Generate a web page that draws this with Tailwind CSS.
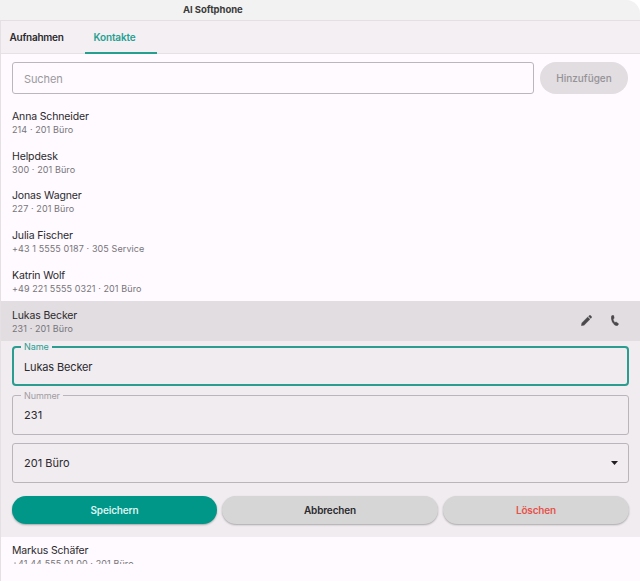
<!DOCTYPE html>
<html lang="de">

<head>
    <meta charset="UTF-8">
    <meta name="viewport" content="width=device-width, initial-scale=1.0">
    <title>AI Softphone</title>
    <script src="https://cdn.jsdelivr.net/npm/@tailwindcss/browser@4"></script>
</head>

<body class="bg-white font-['Inter',sans-serif] text-[#2b292d] overflow-hidden">
    <div class="w-[640px] h-[581px] flex flex-col bg-[#fefaff] rounded-tr-[14px] overflow-hidden">
        <!-- Title bar -->
        <header class="h-[21px] shrink-0 bg-[#f2f2f2] border-b border-[#e3dfe3] pl-[183px] text-[9.5px] leading-[20px] font-bold tracking-[-0.05px] text-[#3b3b3b]">AI Softphone</header>

        <main class="flex-1 min-h-0 border-l border-[#e4e0e4]">
            <!-- Tabs -->
            <nav class="h-[33px] bg-[#f3eff3] border-b border-[#e5e1e5] flex text-[10px] leading-[32px] font-semibold">
                <span class="w-[84px] pl-[8.5px] tracking-[-0.25px]">Aufnahmen</span>
                <span class="w-[72px] h-[33px] pl-[8.5px] tracking-[-0.15px] text-[#269f91] border-b-2 border-[#269f91]">Kontakte</span>
            </nav>

            <!-- Search -->
            <div class="flex gap-[6px] pl-[11px] pt-[8px] h-[49px]">
                <div class="w-[522px] h-8 border border-[#bab6bb] rounded-[3px] pl-[11px] text-[11px] leading-[32px] tracking-[-0.1px] text-[#9c999d]">Suchen</div>
                <button class="w-[88px] h-8 rounded-full bg-[#e1dde1] text-[10px] font-medium text-[#969297]">Hinzufügen</button>
            </div>

            <!-- Contact list -->
            <div class="h-[461px] overflow-hidden">
                <div class="h-[39.6px] pl-[11px] pt-[7px]">
                    <div class="text-[10.5px] leading-[13px] tracking-[-0.15px]">Anna Schneider</div>
                    <div class="text-[9px] leading-[13px] tracking-[0.1px] text-[#777479]">214 · 201 Büro</div>
                </div>
                <div class="h-[39.6px] pl-[11px] pt-[7.5px]">
                    <div class="text-[10.5px] leading-[13px] tracking-[-0.12px]">Helpdesk</div>
                    <div class="text-[9px] leading-[13px] tracking-[0.1px] text-[#777479]">300 · 201 Büro</div>
                </div>
                <div class="h-[39.6px] pl-[11px] pt-[7.2px]">
                    <div class="text-[10.5px] leading-[13px] tracking-[-0.15px]">Jonas Wagner</div>
                    <div class="text-[9px] leading-[13px] tracking-[0.1px] text-[#777479]">227 · 201 Büro</div>
                </div>
                <div class="h-[39.6px] pl-[11px] pt-[7.5px]">
                    <div class="text-[10.5px] leading-[13px] tracking-[-0.15px]">Julia Fischer</div>
                    <div class="text-[9px] leading-[13px] tracking-[0.1px] text-[#777479]">+43 1 5555 0187 · 305 Service</div>
                </div>
                <div class="h-[39.6px] pl-[11px] pt-[7.5px]">
                    <div class="text-[10.5px] leading-[13px] tracking-[-0.15px]">Katrin Wolf</div>
                    <div class="text-[9px] leading-[13px] tracking-[0.1px] text-[#777479]">+49 221 5555 0321 · 201 Büro</div>
                </div>

                <!-- Selected contact -->
                <div class="h-10 pl-[11px] pr-[21px] flex items-center bg-[#e1dde1]">
                    <div class="flex-1 pt-[1.5px]">
                        <div class="text-[10.5px] leading-[13px] tracking-[-0.15px]">Lukas Becker</div>
                        <div class="text-[9px] leading-[13px] tracking-[0.1px] text-[#777479]">231 · 201 Büro</div>
                    </div>
                    <svg class="w-[11px] h-[11px] mr-[19px]" viewBox="0 0 11 11" fill="#4b484c" stroke="#4b484c" stroke-width=".3">
                        <path d="M.3 10.700.8 7.900 6.700 2 9 4.300 3.100 10.200zM7.500 1.300 8.300.5Q9 0 9.600.5l.9.9q.5.6 0 1.300L9.700 3.500z" />
                    </svg>
                    <svg class="w-2 h-[11px]" viewBox="0 0 8 11" fill="#4b484c" stroke="#4b484c" stroke-width=".3">
                        <path d="M.9.6Q1.600.1 2.300.3q.4.1.5.5l.4 2q.1.500-.3.8l-.7.6Q2.500 6 3.900 7.400l.8-.3q.5-.2.900.1l1.700 1.200q.4.3.2.8-.3.800-.9 1.200-1.300.7-3-.4Q.8 7.900.3 4.100-.1 1.500.9.6z" />
                    </svg>
                </div>

                <!-- Edit form -->
                <div class="h-[196px] bg-[#f0ecf0] pl-[11px] pr-[11px] pt-[5.5px]">
                    <div class="relative h-10 border-2 border-[#2a9d90] rounded-[4px] pl-[10px] text-[11px] leading-[38px] tracking-[-0.15px]">
                        <span class="absolute left-[7px] -top-[7px] px-[3px] bg-[#f0ecf0] text-[9px] leading-3 tracking-[-0.1px] text-[#2a9d90]">Name</span>
                        Lukas Becker
                    </div>
                    <div class="relative mt-[8.5px] h-10 border border-[#b9b5ba] rounded-[3px] pl-[11px] text-[11px] leading-[39px] tracking-[0.1px]">
                        <span class="absolute left-2 -top-[6px] px-[3px] bg-[#f0ecf0] text-[9px] leading-3 tracking-[-0.1px] text-[#a19da2]">Nummer</span>
                        231
                    </div>
                    <div class="mt-[8.5px] h-10 border border-[#b9b5ba] rounded-[3px] pl-[11px] pr-[10.5px] flex items-center justify-between text-[11px]">
                        <span>201 Büro</span>
                        <svg class="w-[7px] h-1" viewBox="0 0 7 4" fill="#201e22">
                            <path d="M0 0h7L3.500 4z" />
                        </svg>
                    </div>
                    <div class="mt-[12.5px] flex gap-[5px] text-[10px] font-semibold tracking-[-0.15px]">
                        <button class="w-[205px] h-[28.5px] rounded-full bg-[#009688] text-[#d9f4f1] shadow-[0_1px_2px_rgba(0,0,0,0.3)]">Speichern</button>
                        <button class="w-[216px] h-[28.5px] rounded-full bg-[#d6d6d6] shadow-[0_1px_2px_rgba(0,0,0,0.3)]">Abbrechen</button>
                        <button class="w-[186px] h-[28.5px] rounded-full bg-[#d6d6d6] text-[#e5534b] shadow-[0_1px_2px_rgba(0,0,0,0.3)]">Löschen</button>
                    </div>
                </div>

                <div class="h-[39.6px] pl-[11px] pt-[7.5px]">
                    <div class="text-[10.5px] leading-[13px] tracking-[-0.15px]">Markus Schäfer</div>
                    <div class="text-[9px] leading-[13px] tracking-[0.1px] text-[#777479]">+41 44 555 01 00 · 201 Büro</div>
                </div>
            </div>
        </main>
    </div>
</body>

</html>
